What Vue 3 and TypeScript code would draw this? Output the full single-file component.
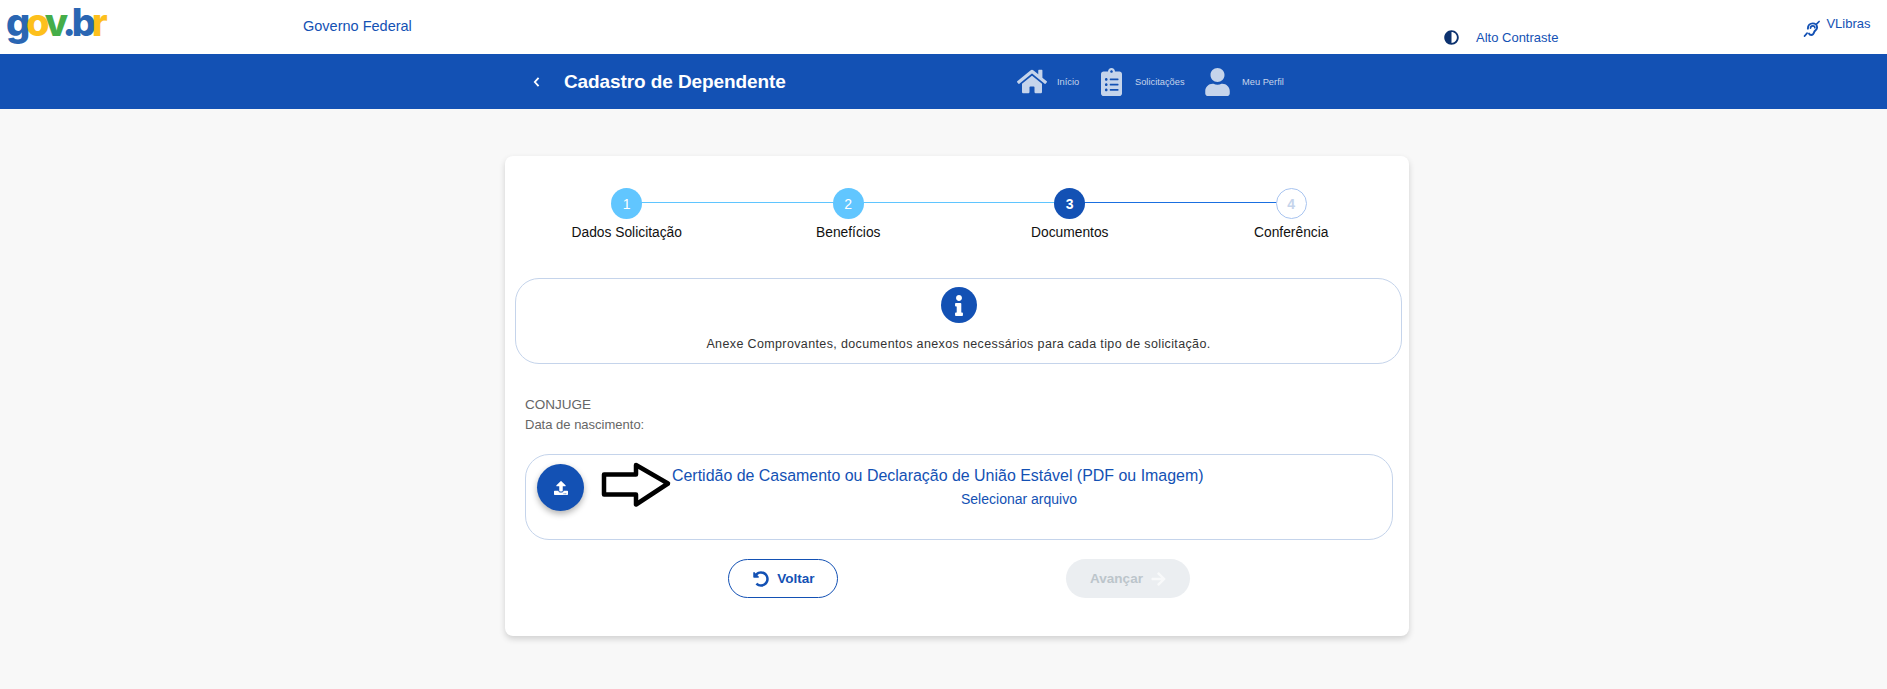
<script setup lang="ts">
interface Step {
    num: number;
    label: string;
    state: "done" | "current" | "pending";
}

const steps: Step[] = [
    { num: 1, label: "Dados Solicitação", state: "done" },
    { num: 2, label: "Benefícios", state: "done" },
    { num: 3, label: "Documentos", state: "current" },
    { num: 4, label: "Conferência", state: "pending" },
];
</script>

<template>
    <div class="page">
        <header class="topbar">
            <div class="logo">
                <span class="c-blue">g</span><span class="c-yellow">o</span><span class="c-green">v</span><span class="c-blue">.b</span><span class="c-yellow">r</span>
            </div>
            <a class="gov-link">Governo Federal</a>
            <div class="contrast">
                <svg class="contrast-icon" viewBox="0 0 512 512">
                    <path fill="#0c326f" d="M8 256c0 136.966 111.033 248 248 248s248-111.034 248-248S392.966 8 256 8 8 119.033 8 256zm248 184V72c101.705 0 184 82.311 184 184 0 101.705-82.311 184-184 184z" />
                </svg>
                <a>Alto Contraste</a>
            </div>
            <div class="vlibras">
                <svg class="vlibras-icon" viewBox="0 0 24 24" fill="none" stroke="#1351b4" stroke-linecap="round">
                    <path stroke-width="2.6" d="M6.5 11.5C6.5 7 9.5 4.5 13 4.5c3.4 0 5.8 2.5 5.8 5.4 0 3.2-3 3.6-3.8 6-.6 2-1.6 4-4 4-1.5 0-2.5-.8-3-1.8" />
                    <path stroke-width="2.2" d="M10 11c0-2 1.3-3.2 3-3.2s2.8 1.2 2.8 2.6" />
                    <path stroke-width="2.2" d="M21.5 2 18 5.5M5.5 17.5 2 21.5" />
                </svg>
                <a>VLibras</a>
            </div>
        </header>

        <nav class="titlebar">
            <span class="back">
                <svg viewBox="0 0 8 12" width="7" height="10" fill="none" stroke="#fff" stroke-width="2.2">
                    <path d="M6.5 1 2 6l4.5 5" />
                </svg>
            </span>
            <h1 class="title">Cadastro de Dependente</h1>
            <div class="menu">
                <a class="menu-item home">
                    <svg width="30" height="27" viewBox="0 0 576 512"><path fill="#c5d4eb" d="M280.37 148.26L96 300.11V464a16 16 0 0 0 16 16l112.06-.29a16 16 0 0 0 15.92-16V368a16 16 0 0 1 16-16h64a16 16 0 0 1 16 16v95.64a16 16 0 0 0 16 16.05L464 480a16 16 0 0 0 16-16V300L295.67 148.26a12.19 12.19 0 0 0-15.3 0zM571.6 251.47L488 182.56V44.05a12 12 0 0 0-12-12h-56a12 12 0 0 0-12 12v72.61L318.47 43a48 48 0 0 0-61 0L4.34 251.47a12 12 0 0 0-1.6 16.9l25.5 31A12 12 0 0 0 45.15 301l235.22-193.74a12.19 12.19 0 0 1 15.3 0L530.9 301a12 12 0 0 0 16.9-1.6l25.5-31a12 12 0 0 0-1.7-16.93z" /></svg>
                    <span>Início</span>
                </a>
                <a class="menu-item list">
                    <svg width="21" height="28" viewBox="0 0 384 512"><path fill="#c5d4eb" d="M336 64h-80c0-35.3-28.7-64-64-64s-64 28.7-64 64H48C21.5 64 0 85.5 0 112v352c0 26.5 21.5 48 48 48h288c26.5 0 48-21.5 48-48V112c0-26.5-21.5-48-48-48zM96 424c-13.3 0-24-10.7-24-24s10.7-24 24-24 24 10.7 24 24-10.7 24-24 24zm0-96c-13.3 0-24-10.7-24-24s10.7-24 24-24 24 10.7 24 24-10.7 24-24 24zm0-96c-13.3 0-24-10.7-24-24s10.7-24 24-24 24 10.7 24 24-10.7 24-24 24zm96-192c13.3 0 24 10.7 24 24s-10.7 24-24 24-24-10.7-24-24 10.7-24 24-24zm128 368c0 4.4-3.6 8-8 8H168c-4.4 0-8-3.6-8-8v-16c0-4.4 3.6-8 8-8h144c4.4 0 8 3.6 8 8v16zm0-96c0 4.4-3.6 8-8 8H168c-4.4 0-8-3.6-8-8v-16c0-4.4 3.6-8 8-8h144c4.4 0 8 3.6 8 8v16zm0-96c0 4.4-3.6 8-8 8H168c-4.4 0-8-3.6-8-8v-16c0-4.4 3.6-8 8-8h144c4.4 0 8 3.6 8 8v16z" /></svg>
                    <span>Solicitações</span>
                </a>
                <a class="menu-item user">
                    <svg width="25" height="28" viewBox="0 0 448 512"><path fill="#c5d4eb" d="M224 256c70.7 0 128-57.3 128-128S294.7 0 224 0 96 57.3 96 128s57.3 128 128 128zm89.6 32h-16.7c-22.2 10.2-46.9 16-72.9 16s-50.6-5.8-72.9-16h-16.7C60.2 288 0 348.2 0 422.4V464c0 26.5 21.5 48 48 48h352c26.5 0 48-21.5 48-48v-41.6c0-74.2-60.2-134.4-134.4-134.4z" /></svg>
                    <span>Meu Perfil</span>
                </a>
            </div>
        </nav>

        <main class="card">
            <ol class="stepper">
                <li v-for="step in steps" :key="step.num" class="step" :class="step.state">
                    <span class="bullet">{{ step.num }}</span>
                    <span class="step-label">{{ step.label }}</span>
                </li>
            </ol>

            <section class="info">
                <span class="info-icon">
                    <svg width="8" height="21" viewBox="0 0 192 512"><path fill="#fff" d="M20 424.229h20V279.771H20c-11.046 0-20-8.954-20-20V212c0-11.046 8.954-20 20-20h112c11.046 0 20 8.954 20 20v212.229h20c11.046 0 20 8.954 20 20V492c0 11.046-8.954 20-20 20H20c-11.046 0-20-8.954-20-20v-47.771c0-11.046 8.954-20 20-20zM96 0C56.235 0 24 32.235 24 72s32.235 72 72 72 72-32.236 72-72S135.764 0 96 0z" /></svg>
                </span>
                <p>Anexe Comprovantes, documentos anexos necessários para cada tipo de solicitação.</p>
            </section>

            <section class="person">
                <div class="person-name">CONJUGE</div>
                <div class="person-birth">Data de nascimento:</div>
            </section>

            <section class="upload">
                <button class="upload-btn" type="button">
                    <svg width="14" height="14" viewBox="0 0 512 512"><path fill="#fff" d="M296 384h-80c-13.3 0-24-10.7-24-24V192h-87.7c-17.8 0-26.7-21.5-14.1-34.1L242.3 5.7c7.5-7.5 19.8-7.5 27.3 0l152.2 152.2c12.6 12.6 3.7 34.1-14.1 34.1H320v168c0 13.3-10.7 24-24 24zm216-8v112c0 13.3-10.7 24-24 24H24c-13.3 0-24-10.7-24-24V376c0-13.3 10.7-24 24-24h136v8c0 30.9 25.1 56 56 56h80c30.9 0 56-25.1 56-56v-8h136c13.3 0 24 10.7 24 24zm-124 88c0-11-9-20-20-20s-20 9-20 20 9 20 20 20 20-9 20-20zm64 0c0-11-9-20-20-20s-20 9-20 20 9 20 20 20 20-9 20-20z" /></svg>
                </button>
                <div class="upload-text">
                    <div class="upload-title">Certidão de Casamento ou Declaração de União Estável (PDF ou Imagem)</div>
                    <div class="upload-pick">Selecionar arquivo</div>
                </div>
                <!-- seta desenhada por cima do print -->
                <svg class="marker" width="76" height="52" viewBox="0 0 76 52">
                    <path fill="none" stroke="#000" stroke-width="4.5" stroke-linejoin="round" d="M4 14.5H36V5L68 23.5 36 44.5V34.5H4Z" />
                </svg>
            </section>

            <div class="actions">
                <button class="btn btn-back" type="button">
                    <svg width="16" height="16" viewBox="0 0 512 512"><path fill="#1351b4" d="M255.545 8c-66.269.119-126.438 26.233-170.86 68.685L48.971 40.971C33.851 25.851 8 36.559 8 57.941V192c0 13.255 10.745 24 24 24h134.059c21.382 0 32.09-25.851 16.971-40.971l-41.75-41.75c30.864-28.899 70.801-44.907 113.23-45.273 92.398-.798 170.283 73.977 169.484 169.442C423.236 348.009 349.816 424 256 424c-41.127 0-79.997-14.678-110.63-41.556-4.743-4.161-11.906-3.908-16.368.553L89.34 422.659c-4.872 4.872-4.631 12.815.482 17.433C133.798 479.813 192.074 504 256 504c136.966 0 247.999-111.033 248-247.998C504.001 119.193 392.354 7.755 255.545 8z" /></svg>
                    Voltar
                </button>
                <button class="btn btn-next" type="button" disabled>
                    Avançar
                    <svg width="15" height="16" viewBox="0 0 448 512"><path fill="#f8f9fa" d="M190.5 66.9l22.2-22.2c9.4-9.4 24.6-9.4 33.9 0L441 239c9.4 9.4 9.4 24.6 0 33.9L246.6 467.3c-9.4 9.4-24.6 9.4-33.9 0l-22.2-22.2c-9.5-9.5-9.3-25 .4-34.3L311.4 296H24c-13.3 0-24-10.7-24-24v-32c0-13.3 10.7-24 24-24h287.4L190.9 101.2c-9.8-9.3-10-24.8-.4-34.3z" /></svg>
                </button>
            </div>
        </main>
    </div>
</template>

<style scoped>
.page {
    min-height: 689px;
    font-family: "Liberation Sans", Arial, sans-serif;
}

.topbar {
    height: 54px;
    display: flex;
    background: #fff;
    color: #1351b4;
}

.logo {
    width: 303px;
    padding: 0 0 0 6px;
    box-sizing: border-box;
    font-family: Inter, sans-serif;
    font-size: 38px;
    font-weight: 800;
    line-height: 45px;
    letter-spacing: -4.2px;
    white-space: nowrap;
}

.c-blue {
    color: #2a66b3;
}

.c-yellow {
    color: #fdc01c;
}

.c-green {
    color: #45ad49;
}

.gov-link {
    width: 108px;
    padding-top: 17px;
    font-size: 14.5px;
    line-height: 18px;
    white-space: nowrap;
}

.contrast {
    margin-left: 1033px;
    padding-top: 30px;
    display: flex;
    align-items: flex-start;
    font-size: 13px;
    line-height: 16px;
}

.contrast-icon {
    width: 15px;
    height: 15px;
    margin-right: 17px;
}

.vlibras {
    margin-left: 245px;
    padding-top: 16px;
    display: flex;
    align-items: flex-start;
    font-size: 13px;
    line-height: 16px;
}

.vlibras-icon {
    width: 18px;
    height: 18px;
    margin: 4px 5px 0 0;
}

.titlebar {
    height: 55px;
    display: flex;
    align-items: center;
    padding-left: 533px;
    background: #1351b4;
    color: #fff;
}

.back {
    width: 31px;
    display: flex;
}

.title {
    width: 453px;
    margin: 0;
    font-size: 19px;
    font-weight: 700;
    letter-spacing: -0.1px;
}

.menu {
    display: flex;
}

.menu-item {
    display: flex;
    align-items: center;
    font-size: 9.3px;
    color: #c5d4eb;
}

.home {
    width: 84px;
    gap: 10px;
}

.list {
    width: 104px;
    gap: 13px;
}

.user {
    gap: 12px;
}

.card {
    width: 904px;
    height: 480px;
    box-sizing: border-box;
    margin: 47px 0 0 505px;
    padding: 32px 7px 0 10px;
    background: #fff;
    border-radius: 8px;
    box-shadow: 0 3px 6px rgba(0, 0, 0, 0.16);
}

.stepper {
    display: grid;
    grid-template-columns: repeat(4, 1fr);
    margin: 0 0 0 1px;
    padding: 0;
    list-style: none;
}

.step {
    position: relative;
    display: flex;
    flex-direction: column;
    align-items: center;
    gap: 6px;
}

.step:not(:last-child)::after {
    content: "";
    position: absolute;
    left: 50%;
    top: 14px;
    width: 100%;
    height: 1px;
    background: #5fc5ff;
}

.step.current::after {
    background: #1a6fe0 !important;
}

.bullet {
    position: relative;
    z-index: 1;
    width: 31px;
    height: 31px;
    box-sizing: border-box;
    border-radius: 50%;
    display: flex;
    align-items: center;
    justify-content: center;
    font-size: 14px;
    line-height: 1;
    background: #61c6ff;
    color: #fff;
}

.current .bullet {
    background: #1351b4;
    font-weight: 700;
}

.pending .bullet {
    background: #fff;
    border: 1px solid #a8c4f0;
    color: #c5d4eb;
    font-weight: 700;
}

.step-label {
    font-size: 13.8px;
    line-height: 16px;
    color: #111;
}

.info {
    height: 86px;
    box-sizing: border-box;
    margin-top: 37px;
    padding-top: 8px;
    display: flex;
    flex-direction: column;
    align-items: center;
    border: 1px solid #c5d4eb;
    border-radius: 24px;
}

.info-icon {
    width: 36px;
    height: 36px;
    border-radius: 50%;
    background: #1351b4;
    display: flex;
    align-items: center;
    justify-content: center;
}

.info p {
    margin: 13px 0 0;
    font-size: 12.5px;
    line-height: 16px;
    letter-spacing: 0.37px;
    color: #333;
}

.person {
    margin: 32px 0 0 10px;
    color: #666;
}

.person-name {
    font-size: 13.5px;
    line-height: 18px;
}

.person-birth {
    margin-top: 2px;
    font-size: 13px;
    line-height: 18px;
}

.upload {
    position: relative;
    display: flex;
    height: 86px;
    box-sizing: border-box;
    margin: 20px 9px 0 10px;
    padding: 9px 0 0 11px;
    border: 1px solid #c5d4eb;
    border-radius: 24px;
}

.upload-btn {
    width: 47px;
    height: 47px;
    padding: 0;
    border: 0;
    border-radius: 50%;
    background: #1351b4;
    box-shadow: 0 3px 6px rgba(0, 0, 0, 0.3);
    display: flex;
    align-items: center;
    justify-content: center;
}

.upload-text {
    margin-left: 88px;
    color: #1351b4;
}

.upload-title {
    font-size: 15.95px;
    line-height: 20px;
    margin-top: 2px;
}

.upload-pick {
    margin: 5px 0 0 289px;
    font-size: 14px;
    line-height: 16px;
}

.marker {
    position: absolute;
    left: 74px;
    top: 5px;
}

.actions {
    display: grid;
    grid-template-columns: 345px 345px;
    justify-content: center;
    justify-items: center;
    margin-top: 19px;
    padding-right: 6px;
}

.btn {
    height: 39px;
    box-sizing: border-box;
    border-radius: 20px;
    display: flex;
    align-items: center;
    justify-content: center;
    gap: 8px;
    font-family: inherit;
    font-size: 13.5px;
    font-weight: 700;
}

.btn-back {
    width: 110px;
    padding-left: 8px;
    background: #fff;
    border: 1px solid #1351b4;
    color: #1351b4;
}

.btn-next {
    width: 124px;
    background: #ebeef1;
    border: 0;
    color: #bcc5cb;
}
</style>

<style>
body {
    margin: 0;
    background: #f8f8f8;
}
</style>
